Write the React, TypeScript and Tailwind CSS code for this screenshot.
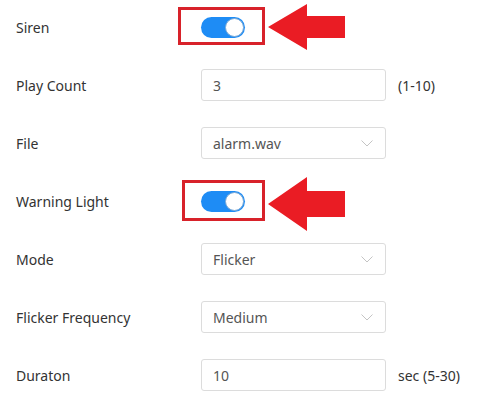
import React from 'react';

function Toggle() {
  return (
    <div className="w-11 h-[21px] rounded-full bg-[#1e8cf5] flex items-center justify-end pr-[1px]">
      <div className="w-[19px] h-[19px] rounded-full bg-white border border-[#7aa9d6]" />
    </div>
  );
}

function Arrow({ h, shaft }: { h: number; shaft: number }) {
  const mid = h / 2;
  const t = mid - shaft / 2;
  const b = mid + shaft / 2;
  return (
    <svg width="78" height={h} viewBox={`0 0 78 ${h}`}>
      <polygon points={`0,${mid} 39,0 39,${t} 77,${t} 77,${b} 39,${b} 39,${h}`} fill="#ea1c24" />
    </svg>
  );
}

function Chevron() {
  return (
    <svg width="12" height="7" viewBox="0 0 12 7">
      <polyline points="0.5,0.5 6,6 11.5,0.5" fill="none" stroke="#c4c4c4" strokeWidth="1" />
    </svg>
  );
}

function TextBox({ value }: { value: string }) {
  return (
    <div className="w-[185px] h-8 border border-[#dcdcdc] rounded-[3px] px-[11px] flex items-center text-[#555]">
      {value}
    </div>
  );
}

function SelectBox({ value }: { value: string }) {
  return (
    <div className="w-[185px] h-8 border border-[#dcdcdc] rounded-[3px] pl-[11px] pr-[12px] flex items-center justify-between text-[#555]">
      <span>{value}</span>
      <Chevron />
    </div>
  );
}

function Row({ label, children }: { label: string; children: React.ReactNode }) {
  return (
    <div className="flex items-center h-8">
      <div className="w-[185px] shrink-0 text-[#333]">{label}</div>
      {children}
    </div>
  );
}

export default function App() {
  return (
    <div className="w-[491px] h-[410px] bg-white pt-[11px] pl-4 text-[14px] flex flex-col gap-[26px]" style={{ fontFamily: '"Noto Sans", "Liberation Sans", sans-serif' }}>
      <Row label="Siren">
        <div className="relative">
          <Toggle />
          {/* annotation */}
          <div className="absolute left-[-23px] top-[-10px] w-[87px] h-[38px] border-[3px] border-[#d8222a]" />
          <div className="absolute left-[67px] top-[-13px]">
            <Arrow h={46} shaft={22} />
          </div>
        </div>
      </Row>
      <Row label="Play Count">
        <TextBox value="3" />
        <span className="ml-3 text-[#333]">(1-10)</span>
      </Row>
      <Row label="File">
        <SelectBox value="alarm.wav" />
      </Row>
      <Row label="Warning Light">
        <div className="relative">
          <Toggle />
          <div className="absolute left-[-19px] top-[-11px] w-[83px] h-[41px] border-[3px] border-[#d8222a]" />
          <div className="absolute left-[67px] top-[-14px]">
            <Arrow h={54} shaft={26} />
          </div>
        </div>
      </Row>
      <Row label="Mode">
        <SelectBox value="Flicker" />
      </Row>
      <Row label="Flicker Frequency">
        <SelectBox value="Medium" />
      </Row>
      <Row label="Duraton">
        <TextBox value="10" />
        <span className="ml-3 text-[#333]">sec (5-30)</span>
      </Row>
    </div>
  );
}
